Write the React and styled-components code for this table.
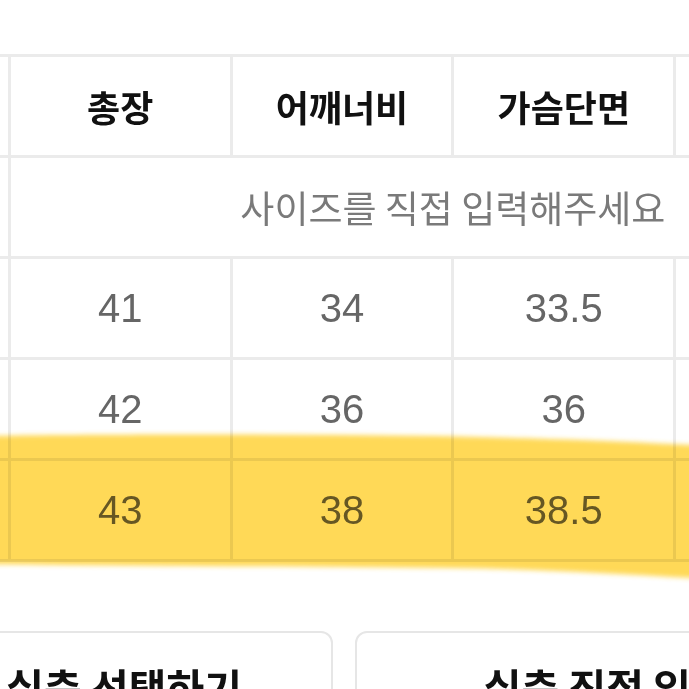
import React from 'react';
import styled, { createGlobalStyle } from 'styled-components';

const GlobalStyle = createGlobalStyle`
  html, body {
    margin: 0;
    padding: 0;
    background: #ffffff;
    overflow: hidden;
  }
  body {
    font-family: "Liberation Sans", "Noto Sans CJK KR", sans-serif;
  }
`;

const Page = styled.div`
  width: 1178px;
  margin-left: -245px;
  padding-top: 54px;
`;

const TableWrap = styled.div`
  position: relative;
  margin: 0 36px 0 31px;
`;

const SizeTable = styled.table`
  border-collapse: collapse;
  table-layout: fixed;
  width: 1112px;
`;

const Cell = styled.td`
  height: 98px;
  padding: 0;
  border: 3px solid #ebebeb;
  text-align: center;
  vertical-align: middle;
  font-family: "Liberation Sans", "Noto Sans CJK KR", sans-serif;
  font-size: 40px;
  line-height: 1;
  color: #666666;
`;

const HeadCell = styled(Cell)`
  font-family: "Noto Sans CJK KR", sans-serif;
  font-size: 36px;
  font-weight: 700;
  color: #111111;
`;

const NoteCell = styled(Cell)`
  font-family: "Noto Sans CJK KR", sans-serif;
  font-size: 37px;
  color: #7a7a7a;
`;

const Highlight = styled.svg`
  position: absolute;
  left: 194px;
  top: 370px;
  width: 730px;
  height: 170px;
  pointer-events: none;
  mix-blend-mode: multiply;
`;

const ButtonRow = styled.div`
  display: flex;
  gap: 22px;
  margin-top: 69px;
`;

const ActionButton = styled.button`
  width: 578px;
  height: 120px;
  flex: none;
  border: 2px solid #e6e6e6;
  border-radius: 12px;
  background: #ffffff;
  padding: 33px 0 0;
  display: flex;
  justify-content: center;
  align-items: flex-start;
  white-space: nowrap;
  font-family: "Noto Sans CJK KR", sans-serif;
  font-size: 41px;
  line-height: 1;
  font-weight: 700;
  color: #111111;
`;

const columns = ['총장', '어깨너비', '가슴단면', '소매길이'];

const rows = [
  { size: 'S', values: ['41', '34', '33.5', '60'] },
  { size: 'M', values: ['42', '36', '36', '61'] },
  { size: 'L', values: ['43', '38', '38.5', '62'] },
];

const App = () => {
  return (
    <>
      <GlobalStyle />
      <Page>
        <TableWrap>
          <SizeTable>
            <tbody>
              <tr>
                <HeadCell>사이즈</HeadCell>
                {columns.map((c) => (
                  <HeadCell key={c}>{c}</HeadCell>
                ))}
              </tr>
              <tr>
                <Cell />
                <NoteCell colSpan={4}>사이즈를 직접 입력해주세요</NoteCell>
              </tr>
              {rows.map((r) => (
                <tr key={r.size}>
                  <Cell>{r.size}</Cell>
                  {r.values.map((v, i) => (
                    <Cell key={i}>{v}</Cell>
                  ))}
                </tr>
              ))}
            </tbody>
          </SizeTable>
          <Highlight viewBox="0 0 730 170">
            <defs>
              <filter id="soft" x="-5%" y="-20%" width="110%" height="140%">
                <feGaussianBlur stdDeviation="2.5" />
              </filter>
            </defs>
            <path
              d="M0 12 C 120 10, 300 10, 460 12 C 560 14, 660 18, 730 22 L 730 155 C 640 150, 560 145, 470 144 C 330 142, 160 142, 0 140 Z"
              fill="#ffd64a"
              opacity="0.92"
              filter="url(#soft)"
            />
          </Highlight>
        </TableWrap>
        <ButtonRow>
          <ActionButton>사이즈별 실측 선택하기</ActionButton>
          <ActionButton>실측 직접 입력하기</ActionButton>
        </ButtonRow>
      </Page>
    </>
  );
};

export default App;
